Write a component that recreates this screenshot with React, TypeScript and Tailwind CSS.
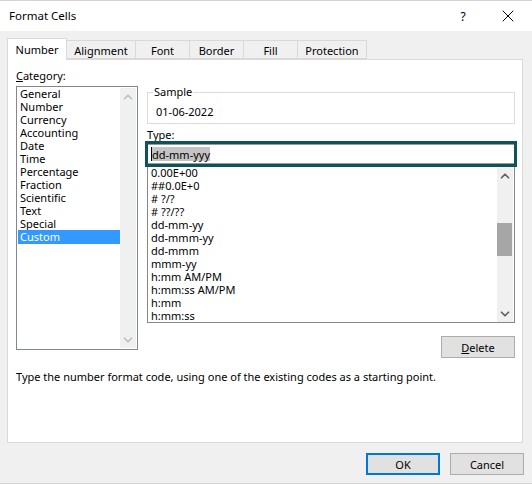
import { ChevronUp, ChevronDown, X } from 'lucide-react'

const categories = ['General', 'Number', 'Currency', 'Accounting', 'Date', 'Time', 'Percentage', 'Fraction', 'Scientific', 'Text', 'Special', 'Custom']
const formats = ['0.00E+00', '##0.0E+0', '# ?/?', '# ??/??', 'dd-mm-yy', 'dd-mmm-yy', 'dd-mmm', 'mmm-yy', 'h:mm AM/PM', 'h:mm:ss AM/PM', 'h:mm', 'h:mm:ss']
const tabs = [
  { name: 'Alignment', width: 'w-[69px]' },
  { name: 'Font', width: 'w-[54px]' },
  { name: 'Border', width: 'w-[54px]' },
  { name: 'Fill', width: 'w-[54px]' },
  { name: 'Protection', width: 'w-[69px]' },
]

function Scrollbar({ dark, thumb }: { dark?: boolean; thumb?: boolean }) {
  const arrow = dark ? 'text-[#606060]' : 'text-[#c0c0c0]'
  return (
    <div className="w-[16px] shrink-0 bg-[#f0f0f0] flex flex-col items-center justify-between">
      <div className="h-[17px] flex items-center justify-center">
        <ChevronUp size={14} strokeWidth={3} className={arrow} />
      </div>
      {thumb && <div className="w-[15px] self-start h-[33px] bg-[#a6a6a6] mt-[39px] mb-[49px]" />}
      <div className="h-[17px] flex items-center justify-center">
        <ChevronDown size={14} strokeWidth={3} className={arrow} />
      </div>
    </div>
  )
}

function Button({ label, primary }: { label: React.ReactNode; primary?: boolean }) {
  return (
    <div
      className={
        primary
          ? 'w-[74px] h-[22px] bg-[#e1e1e1] border-2 border-[#0078d7] flex items-center justify-center'
          : 'w-[74px] h-[22px] bg-[#e1e1e1] border border-[#adadad] flex items-center justify-center'
      }
    >
      {label}
    </div>
  )
}

export default function App() {
  return (
    <div
      className="w-[532px] h-[484px] bg-[#f0f0f0] text-[11px] leading-[13px] text-black flex flex-col border-t border-b border-[#d4d4d4] overflow-hidden"
      style={{ fontFamily: '"Noto Sans", sans-serif' }}
    >
      <div className="h-[30px] shrink-0 bg-white flex items-center justify-between">
        <span className="ml-[9px] -mt-[1px] text-[11.5px]">Format Cells</span>
        <div className="flex items-center">
          <span className="text-[12px] w-[20px] text-center mr-[25px]">?</span>
          <X size={20} strokeWidth={1.2} className="mr-[14px]" />
        </div>
      </div>

      <div className="flex flex-col pl-[7px] pr-[9px] pt-[7px] flex-1 min-h-0">
        <div className="flex items-end h-[22px] shrink-0 relative z-10">
          <div className="w-[60px] h-[22px] bg-white border border-b-0 border-[#d9d9d9] flex items-center justify-center">Number</div>
          {tabs.map((t) => (
            <div key={t.name} className={`${t.width} h-[19px] mb-[1px] pt-[1px] bg-[#f0f0f0] border border-l-0 border-[#d9d9d9] flex items-center justify-center`}>
              {t.name}
            </div>
          ))}
        </div>

        <div className="h-[384px] -mt-[1px] bg-white border border-[#d9d9d9] pl-[8px] pr-[7px] flex flex-col">
          <div className="flex">
            <div className="w-[122px] shrink-0 flex flex-col pt-[9px]">
              <div className="h-[16px] mb-[1px]"><span className="underline">C</span>ategory:</div>
              <div className="h-[264px] border border-[#828790] flex p-[1px]">
                <div className="flex-1 flex flex-col -mt-[1px]">
                  {categories.map((c) => (
                    <div key={c} className={c === 'Custom' ? 'h-[14px] pl-[2px] bg-[#3399ff] text-white' : 'h-[13px] pl-[2px]'}>
                      {c}
                    </div>
                  ))}
                </div>
                <Scrollbar />
              </div>
            </div>

            <div className="w-[368px] ml-[9px] shrink-0 flex flex-col pt-[26px]">
              <fieldset className="h-[38px] border border-[#dcdcdc] px-[5px] m-0">
                <legend className="px-[1px] -translate-y-[1px]">Sample</legend>
                <div className="pl-[3px] pt-[6px]">01-06-2022</div>
              </fieldset>
              <div className="mt-[4px] h-[13px]">Type:</div>
              <div className="-mx-[2px] h-[26px] border-[3px] border-[#0f5257] relative z-10">
                <div className="h-full border-y border-[#9a9a9a] bg-white pl-[3px] flex items-center">
                  <span className="bg-[#c4c4c4] h-[14px] flex items-center border-l border-black">dd-mm-yyy</span>
                </div>
              </div>
              <div className="h-[156px] border-x border-b border-[#828790] flex pl-[3px] pr-[1px]">
                <div className="flex-1 flex flex-col -mt-[1px]">
                  {formats.map((f) => (
                    <div key={f} className="h-[13px]">{f}</div>
                  ))}
                </div>
                <Scrollbar dark thumb />
              </div>
              <div className="flex justify-end mt-[13px]">
                <Button label={<span><span className="underline">D</span>elete</span>} />
              </div>
            </div>
          </div>
          <div className="mt-[12px]">Type the number format code, using one of the existing codes as a starting point.</div>
        </div>

        <div className="flex justify-end gap-[10px] mt-[10px] -mr-[1px]">
          <Button primary label="OK" />
          <Button label="Cancel" />
        </div>
      </div>
    </div>
  )
}
